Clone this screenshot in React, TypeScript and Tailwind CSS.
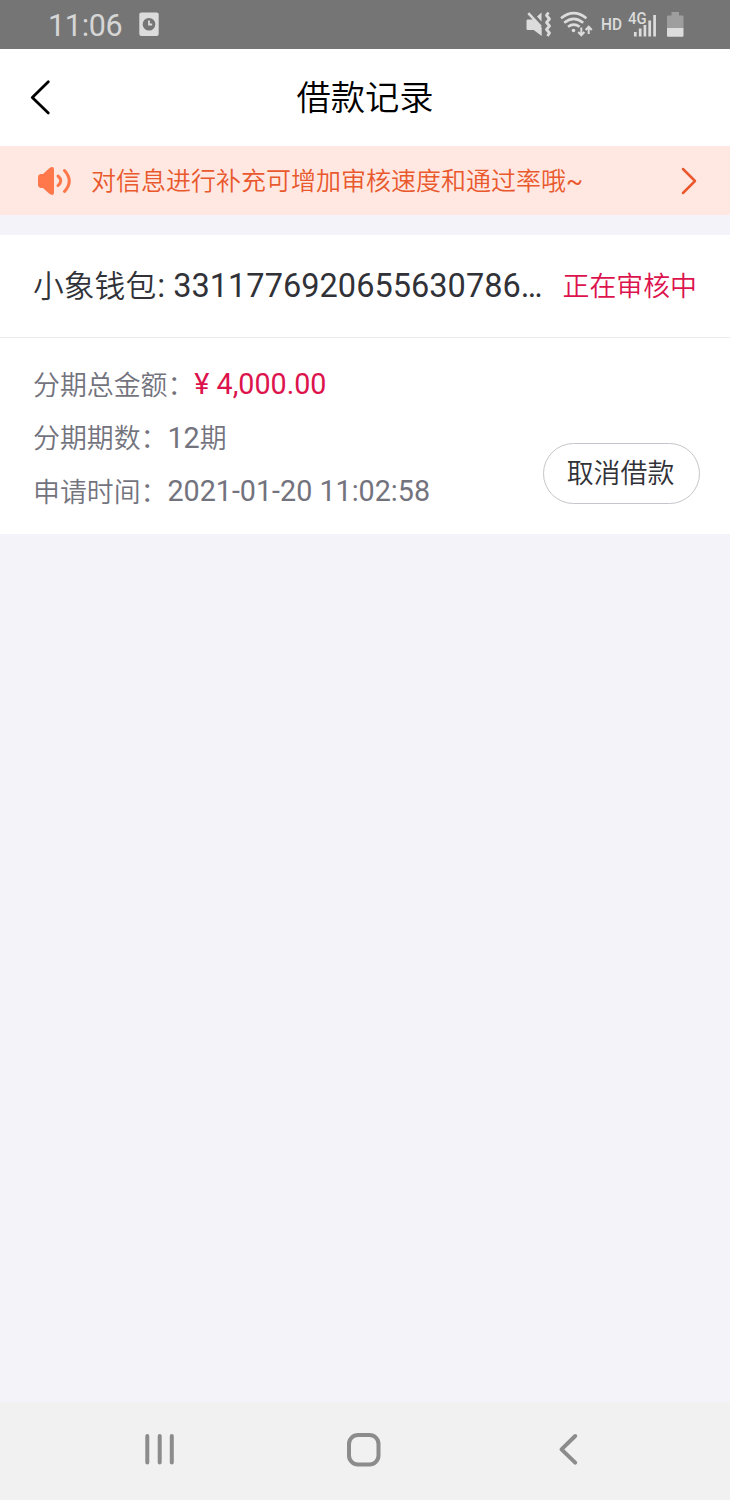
import type { ReactNode } from "react"

const StatusBar = () => (
  <div className="flex h-[49px] items-center bg-[#757575] pl-12 text-[#d6d6d6]">
    <span className="w-[91px] pt-0.5 text-[30.5px] leading-[47px] font-normal tracking-[-0.3px]">11:06</span>
    <svg width="20" height="25" viewBox="0 0 20 25">
      <rect x="0.3" y="0.5" width="19.4" height="23.5" rx="2" fill="#dcdcdc" />
      <circle cx="10" cy="12.3" r="6.3" fill="#757575" />
      <path d="M10 8.5v4h3.2" fill="none" stroke="#dcdcdc" strokeWidth="1.8" />
    </svg>
    <svg className="ml-auto" width="220" height="49" viewBox="510 0 220 49" fill="none" stroke="#dcdcdc">
      {/* ミュート + バイブ */}
      <path d="M527.7 19.5h6l8 8V36l-8-6h-6q-1.2 0-1.2-1.2v-8q0-1.300 1.200-1.300z" fill="#dcdcdc" stroke="none" />
      <path d="M537 16.5l4.5-4v9z" fill="#dcdcdc" stroke="none" />
      <path d="M528.3 13.2l12.5 13.5" strokeWidth="2.6" />
      <path d="M548.5 12.5l-2 2.8 3 3.7-3 3.5 3 3.5-3 3.5 3 3.5-2 3" strokeWidth="2.8" strokeLinejoin="round" />
      {/* Wi-Fi */}
      <path d="M561 18.3q12.7-10.3 25.4 0" strokeWidth="2.6" />
      <path d="M564.2 22.8q9.5-7.8 19 0" strokeWidth="2.6" />
      <path d="M568 26.8q5.8-4.4 11.6 0" strokeWidth="2.6" />
      <circle cx="573.5" cy="30.5" r="1.8" fill="#dcdcdc" stroke="none" />
      <path d="M581.3 27.5v7.5M578.2 32l3.1 3.2 3.1-3.2M588.7 34v-7M585.6 30l3.1-3.2 3.1 3.2" strokeWidth="2" />
      <text x="601" y="29.5" fill="#dcdcdc" stroke="none" fontSize="16.5" fontWeight="500" textLength="21" lengthAdjust="spacingAndGlyphs">HD</text>
      <text x="628" y="24.3" fill="#dcdcdc" stroke="none" fontSize="16" fontWeight="500" textLength="18.5" lengthAdjust="spacingAndGlyphs">4G</text>
      <path d="M635.3 32v4.5M640.2 28.5v8M644.9 25v11.5M649.7 20.5v16M654.6 15v21.5" strokeWidth="2.7" />
      {/* 電池 */}
      <path d="M667 28V16.5q0-1 1-1h3.5V12h7.5v3.5h3.5q1 0 1 1V28z" fill="#9e9e9e" stroke="none" />
      <path d="M667 28h16.5v8q0 .8-1 .8H668q-1 0-1-.8z" fill="#dcdcdc" stroke="none" />
    </svg>
  </div>
)

const InfoRow = ({ label, children }: { label: string; children: ReactNode }) => (
  <div className="flex h-[53.5px] items-center whitespace-pre">
    <span className="pt-0.5 text-[26.9px] font-[350]">{label}</span>
    {children}
  </div>
)

export default function App() {
  return (
    <main lang="zh-CN" className="flex h-[1500px] w-[730px] flex-col overflow-hidden bg-[#f3f3f9] font-[Roboto,'Noto_Sans_CJK_SC',sans-serif]">
      <StatusBar />

      <header className="grid h-[97px] grid-cols-[100px_1fr_100px] items-center bg-white text-black">
        <svg className="ml-[30px] mb-0.5" width="22" height="36" viewBox="0 0 22 36" fill="none" stroke="currentColor" strokeWidth="2.8" strokeLinecap="round" strokeLinejoin="round">
          <path d="M18.3 2.800L2.300 18.500l16 15.400" />
        </svg>
        <h1 className="pt-0.5 text-center text-[34.3px] leading-[95px] font-[350]">借款记录</h1>
      </header>

      <div className="flex h-[69px] items-center bg-[#ffe8e2] pr-[33px] pl-[37px] text-[#e9592d]">
        <svg width="35" height="30" viewBox="0 0 35 30" fill="none" stroke="#ff784b">
          <path d="M3.5 8H6L12 2.500q5-3.500 5 1.500v22q0 5-5 1.500L6 22H3.500Q1 21.500 1 19v-8q0-2.500 2.500-3z" fill="#ff784b" stroke="none" />
          <path d="M21 10q5.500 4.800 0 9.600" strokeWidth="3" strokeLinecap="round" />
          <path d="M27.5 4.5q9.5 10.500 0 21" strokeWidth="3" strokeLinecap="round" />
        </svg>
        <p className="ml-[19px] pt-0.5 text-[25px] leading-[67px] font-[350]">
          对信息进行补充可增加审核速度和通过率哦<span className="font-normal">~</span>
        </p>
        <svg className="ml-auto" width="16" height="28" viewBox="0 0 16 28" fill="none" stroke="currentColor" strokeWidth="2.5" strokeLinecap="round" strokeLinejoin="round">
          <path d="M2 2l12 12L2 26" />
        </svg>
      </div>

      <section className="mt-5 h-[299px] bg-white">
        <div className="flex h-[103px] items-center justify-between border-b border-[#ececee] px-[33px] text-[#303238]">
          <h2 className="flex items-baseline text-[32.5px] whitespace-pre">
            <span className="text-[30.8px] font-[350]">小象钱包</span>
            <span className="ml-px tracking-[0.03px]">: 3311776920655630786…</span>
          </h2>
          <span className="pt-0.5 text-[26.9px] font-[350] text-[#dc134c]">正在审核中</span>
        </div>
        <div className="flex justify-between pt-5 pr-[30px] pl-[33px] text-[28.7px] text-[#73737e]">
          <div>
            <InfoRow label="分期总金额：">
              <span className="text-[#dc134c]">¥ 4,000.00</span>
            </InfoRow>
            <InfoRow label="分期期数：">
              12<span className="pt-0.5 text-[26.9px] font-[350]">期</span>
            </InfoRow>
            <InfoRow label="申请时间：">2021-01-20 11:02:58</InfoRow>
          </div>
          <button className="mt-[85px] h-[61px] w-[157px] rounded-full border-[1.5px] border-[#c5c5cb] pt-0.5 pr-0.5 text-[26.9px] font-[350] text-[#303238]">
            取消借款
          </button>
        </div>
      </section>

      <nav className="mt-auto h-[98px] bg-[#f1f1f1]">
        <svg width="730" height="98" viewBox="0 1402 730 98" fill="none" stroke="#8c8c8c" strokeWidth="4" strokeLinecap="round" strokeLinejoin="round">
          <path d="M147.3 1436v26.5M159.7 1436v26.5M171.8 1436v26.5" />
          <rect x="349" y="1435" width="29.5" height="29.5" rx="9" />
          <path d="M575.2 1436L561.5 1449.4l13.700 13.200" />
        </svg>
      </nav>
    </main>
  )
}
